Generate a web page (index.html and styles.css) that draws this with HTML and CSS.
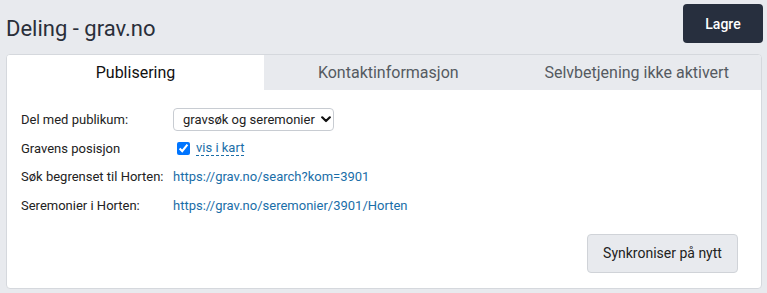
FILE: index.html
```html
<!DOCTYPE html>
<html lang="no">
<head>
  <meta charset="UTF-8">
  <meta name="viewport" content="width=device-width, initial-scale=1.0">
  <title>Deling - grav.no</title>
  <link rel="stylesheet" href="styles.css">
</head>
<body>
  <div class="header">
    <h1>Deling - grav.no</h1>
    <button class="save-button">Lagre</button>
  </div>

  <div class="card">
    <div class="tabs">
      <div class="tab active">Publisering</div>
      <div class="tab">Kontaktinformasjon</div>
      <div class="tab">Selvbetjening ikke aktivert</div>
    </div>

    <div class="tab-body">
      <div class="form">
        <div class="label">Del med publikum:</div>
        <div class="value">
          <div class="select-wrap">
            <select class="share-select">
              <option>gravsøk og seremonier</option>
              <option>kun gravsøk</option>
              <option>ingen</option>
            </select>
            <svg class="chevron" width="10" height="7" viewBox="0 0 10 7">
              <path d="M1.2 1.3 L5 5 L8.8 1.3" fill="none" stroke="#111" stroke-width="2.2" stroke-linecap="round" stroke-linejoin="round"/>
            </svg>
          </div>
        </div>

        <div class="label">Gravens posisjon</div>
        <div class="value">
          <input type="checkbox" checked>
          <a href="#" class="map-link">vis i kart</a>
        </div>

        <div class="label">Søk begrenset til Horten:</div>
        <div class="value"><a href="#">https://grav.no/search?kom=3901</a></div>

        <div class="label">Seremonier i Horten:</div>
        <div class="value"><a href="#">https://grav.no/seremonier/3901/Horten</a></div>
      </div>

      <div class="actions">
        <button class="sync-button">Synkroniser på nytt</button>
      </div>
    </div>
  </div>
</body>
</html>
```

FILE: styles.css
```css
body {
  margin: 0;
  padding: 4px 5px 0 6px;
  background-color: #e8eaee;
  font-family: Roboto, "Liberation Sans", Arial, sans-serif;
  color: #222;
}
.header {
  display: flex;
  justify-content: space-between;
  align-items: flex-start;
  height: 50px;
}
h1 {
  margin: 12px 0 0;
  font-size: 22px;
  font-weight: 400;
  line-height: 26px;
  color: #2a2f3a;
}
.save-button {
  width: 80px;
  height: 39px;
  margin-right: -1px;
  border: none;
  border-radius: 4px;
  background-color: #272f3e;
  color: #fff;
  font-family: inherit;
  font-size: 14px;
  font-weight: 500;
}
.card {
  border: 1px solid #d5d8dd;
  border-radius: 4px;
  background-color: #fff;
  overflow: hidden;
}
.tabs {
  display: flex;
  background-color: #e8eaee;
}
.tab {
  flex: 1;
  height: 35px;
  line-height: 35px;
  text-align: center;
  font-size: 16px;
  color: #555a61;
}
.tab.active {
  flex: 0 0 257px;
  background-color: #fff;
  color: #111;
}
.tab-body {
  padding: 15px 23px 15px 14px;
}
.form {
  display: grid;
  grid-template-columns: 152px auto;
  grid-auto-rows: 28.7px;
  align-items: center;
  font-size: 13px;
}
.value {
  display: flex;
  align-items: center;
}
.select-wrap {
  position: relative;
  display: flex;
}
.share-select {
  appearance: none;
  width: 161px;
  height: 23px;
  padding: 0 0 0 9px;
  border: 1px solid #c8ccd2;
  border-radius: 4px;
  background-color: #fff;
  font-family: inherit;
  font-size: 13px;
  color: #222;
}
.chevron {
  position: absolute;
  right: 3px;
  top: 8px;
  pointer-events: none;
}
.value input {
  margin: 0 6px 0 4px;
  width: 13px;
  height: 13px;
}
a {
  color: #1a6ea8;
  text-decoration: none;
}
.map-link {
  border-bottom: 1px dashed #1a6ea8;
  line-height: 15px;
}
.actions {
  display: flex;
  justify-content: flex-end;
  margin-top: 14px;
}
.sync-button {
  width: 151px;
  height: 39px;
  border: 1px solid #d0d3d8;
  border-radius: 4px;
  background-color: #e8eaee;
  color: #222;
  font-family: inherit;
  font-size: 14px;
}
```
